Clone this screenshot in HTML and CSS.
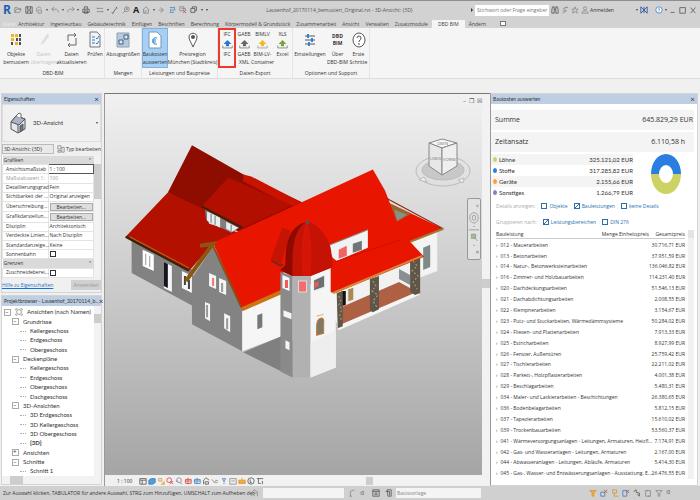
FILE: index.html
```html
<!DOCTYPE html>
<html lang="de">
<head>
    <meta charset="UTF-8">
    <meta name="viewport" content="width=device-width, initial-scale=1.0">
    <title>Lausenhof - 3D-Ansicht</title>
    <link rel="stylesheet" href="styles.css">
</head>
<body>

    <header class="titlebar">
        <div class="quick">
            <span class="logo">R</span>
            <svg class="ico" viewBox="0 0 10 10"><path d="M1 8V2h3l1 1h3v2M1 8l2-4h6L7 8z"/></svg>
            <svg class="ico dark" viewBox="0 0 10 10"><path d="M1 1h8v8H1zM3 1v3h4V1M3 9V6h4v3"/></svg>
            <svg class="ico" viewBox="0 0 10 10"><path d="M2 7V3l3-2 3 2M4 9V5h4v4z"/></svg>
            <span class="caret"></span>
            <svg class="ico" viewBox="0 0 10 10"><path d="M4 1L1 4l3 3M1 4h6l2 2v2"/></svg>
            <span class="caret"></span>
            <svg class="ico" viewBox="0 0 10 10"><path d="M6 1l3 3-3 3M9 4H3L1 6v2"/></svg>
            <span class="caret"></span>
            <svg class="ico dark" viewBox="0 0 10 10"><path d="M3 4V1h4v3M1 4h8v4H1zM3 6h4v3H3z"/></svg>
            <span class="split"></span>
            <svg class="ico" viewBox="0 0 10 10"><path d="M1 3h8M1 7h8M2 2v2M8 6v2"/></svg>
            <span class="caret"></span>
            <svg class="ico dark" viewBox="0 0 10 10"><path d="M2 9l5-7M1 8l2 2M6 1l2 2"/></svg>
            <svg class="ico" viewBox="0 0 10 10"><circle cx="6" cy="4" r="3"/><path d="M4 6L1 9M5 5l1-3 1 3"/></svg>
            <span class="letter">A</span>
            <svg class="ico" viewBox="0 0 10 10"><path d="M1 5l4-4 4 4M2 4v5h6V4M4 9V6h2"/></svg>
            <span class="caret"></span>
            <svg class="ico" viewBox="0 0 10 10"><path d="M3 2l4 3-4 3M1 5h5"/></svg>
            <svg class="ico blue" viewBox="0 0 10 10"><path d="M1 2h5M3 5h5M1 8h5M7 1v3M2 4v3"/></svg>
            <svg class="ico" viewBox="0 0 10 10"><path d="M1 1h5v5H1zM3 3h5v2"/><path class="red" d="M5 5l4 4M9 5L5 9"/></svg>
            <svg class="ico dark" viewBox="0 0 10 10"><path d="M1 3h5v5H1zM3 3V1h5v5H6"/></svg>
            <span class="caret"></span>
            <span class="caret"></span>
        </div>
        <h1 class="doc-title">Lausenhof_20170114_bemustert_Original.rvt - 3D-Ansicht: {3D}</h1>
        <div class="tools">
            <span class="arrow"></span>
            <input class="search" type="text" aria-label="Suche" placeholder="Stichwort oder Frage eingeben">
            <svg class="ico dark" viewBox="0 0 10 10"><path d="M1 9V5l1-4h2v8zM6 9V1h2l1 4v4zM4 4h2"/></svg>
            <svg class="ico" viewBox="0 0 10 10"><path d="M8 1L3 3l4 3-5 3M2 6h3M5 2h4"/></svg>
            <svg class="ico" viewBox="0 0 10 10"><path d="M5 1l1 3h3L7 6l1 3-3-2-3 2 1-3-2-2h3z"/></svg>
            <a class="login" href="#"><svg class="ico" viewBox="0 0 10 10"><circle cx="5" cy="3" r="2"/><path d="M1 9c0-4 8-4 8 0z"/></svg>Anmelden</a>
            <span class="caret"></span>
            <svg class="ico navy" viewBox="0 0 10 10"><path d="M1 1l4 4-4 4zM9 1L5 5l4 4zM5 1v8"/></svg>
            <svg class="ico blue help" viewBox="0 0 10 10"><circle cx="5" cy="5" r="4" fill="#fff"/><path d="M4 4q1-2 2 0L5 5v1M5 7v1"/></svg>
            <span class="caret"></span>
            <button class="win" aria-label="Minimieren"><svg class="ico dark" viewBox="0 0 10 10"><path d="M2 8h5"/></svg></button>
            <button class="win" aria-label="Maximieren"><svg class="ico dark" viewBox="0 0 10 10"><path d="M1 2h7v7H1z"/></svg></button>
            <button class="win" aria-label="Schließen"><svg class="ico dark" viewBox="0 0 10 10"><path d="M2 2l6 7M8 2L2 9"/></svg></button>
        </div>
    </header>

    <nav class="tabs">
        <a class="file" href="#">Datei</a>
        <a href="#">Architektur</a>
        <a href="#">Ingenieurbau</a>
        <a href="#">Gebäudetechnik</a>
        <a href="#">Einfügen</a>
        <a href="#">Beschriften</a>
        <a href="#">Berechnung</a>
        <a href="#">Körpermodell &amp; Grundstück</a>
        <a href="#">Zusammenarbeit</a>
        <a href="#">Ansicht</a>
        <a href="#">Verwalten</a>
        <a href="#">Zusatzmodule</a>
        <a class="active" href="#">DBD BIM</a>
        <a href="#">Ändern</a>
        <span class="tab-menu"></span>
    </nav>

    <section class="ribbon">
        <div class="group g-dbd">
            <div class="buttons">
                <button><svg viewBox="0 0 14 18"><g fill="#f0b429"><path d="M2 3h3v3H2zM6 3h3v3H6zM2 7h3v3H2zM6 11h3v3H6z"/></g><g fill="#505050"><path d="M10 3h2v3h-2zM7 7h2v3H7zM10 7h2v3h-2zM2 11h2v3H2zM10 11h2v3h-2z"/></g></svg><span>Objekte<br>bemustern</span></button>
                <button class="off"><svg viewBox="0 0 14 18"><path d="M2 16L6 9l5-7 1 3-5 7-4 2z" fill="#ddd"/></svg><span>Daten<br>übertragen</span></button>
                <button><svg viewBox="0 0 14 18"><path d="M3 10V4h8M9 2l2 2-2 2M11 7v7H3M5 12l-2 2 2 2" fill="none" stroke="#666"/></svg><span>Daten<br>aktualisieren</span></button>
                <button><svg viewBox="0 0 14 18"><path d="M2 1h7l3 3v12H2z" fill="#eef4fa" stroke="#777"/><path d="M4 6h3M4 9h3M4 12h3M8 7l1 1 2-3M8 12l1 1 2-3" fill="none" stroke="#3a7dc0"/></svg><span>Prüfen</span></button>
            </div>
            <p>DBD-BIM</p>
        </div>
        <div class="group g-mengen">
            <div class="buttons">
                <button><svg viewBox="0 0 14 18"><path d="M1 2h12v14H1z" fill="#b9c9d9" stroke="#8fa2b5"/><path d="M3 9h4v4H3zM8 4h4v4H8z" fill="#dce8f4" stroke="#3c5f86"/></svg><span>Abzugsgrößen</span></button>
            </div>
            <p>Mengen</p>
        </div>
        <div class="group g-preise">
            <div class="buttons">
                <button class="pressed"><svg viewBox="0 0 14 18"><path d="M1 1h8l4 4v12H1z" fill="#fff" stroke="#7b97b3"/><path d="M9 7q-4-1-4 3t4 3M4 9h4M4 11h4" fill="none" stroke="#2b86d9"/></svg><span>Baukosten<br>auswerten</span></button>
                <button><svg viewBox="0 0 14 18"><path d="M7 16C5 11 3 9 3 6c0-5 8-5 8 0 0 3-2 5-4 10z" fill="#fff" stroke="#555"/><circle cx="7" cy="6" r="2" fill="#555"/></svg><span>Preisregion<br>München (Stadtkreis)</span></button>
            </div>
            <p>Leistungen und Baupreise</p>
        </div>
        <div class="group g-export">
            <div class="buttons">
                <button class="marked"><b>IFC</b><svg viewBox="0 0 14 12"><path d="M7 1l5 5H9v3H5V6H2z" fill="#1f78d1"/><path d="M1 8v3h12V8" fill="none" stroke="#777"/></svg><span>IFC</span></button>
                <button><b>GAEB</b><svg viewBox="0 0 14 12"><path d="M7 1l5 5H9v3H5V6H2z" fill="#666"/><path d="M1 8v3h12V8" fill="none" stroke="#777"/></svg><span>GAEB<br>XML</span></button>
                <button><b>BIMLV</b><svg viewBox="0 0 14 12"><path d="M7 1l5 5H9v3H5V6H2z" fill="#f5b81f"/><path d="M1 8v3h12V8" fill="none" stroke="#999"/></svg><span>BIM-LV-<br>Container</span></button>
                <button><b>XLS</b><svg viewBox="0 0 14 12"><path d="M7 1l5 5H9v3H5V6H2z" fill="#7aa33c"/><path d="M1 8v3h12V8" fill="none" stroke="#777"/></svg><span>Excel</span></button>
            </div>
            <p>Daten-Export</p>
        </div>
        <div class="group g-support">
            <div class="buttons">
                <button><svg viewBox="0 0 14 18"><path d="M2 5h10M2 9h10M2 13h10" stroke="#555"/><path d="M5 3v4M9 7v4M6 11v4" stroke="#2b86d9" stroke-width="2"/></svg><span>Einstellungen</span></button>
                <button><strong>DBD<br>BIM</strong><span>Über<br>DBD-BIM</span></button>
                <button><svg viewBox="0 0 14 18"><ellipse cx="7" cy="9" rx="6" ry="7" fill="#fff" stroke="#555"/><path d="M5 7q0-2 2-2t2 2-2 3v1M7 12v2" fill="none" stroke="#555"/></svg><span>Erste<br>Schritte</span></button>
            </div>
            <p>Optionen und Support</p>
        </div>
    </section>
    <div class="options"></div>

    <main class="workspace">
        <aside class="left">
            <section class="panel props">
                <h2>Eigenschaften <button aria-label="Schließen">×</button></h2>
                <div class="type">
                    <svg viewBox="0 0 20 24"><path d="M3 11l5-6 9 3v10l-7 4-7-4z" fill="#e4e8ee" stroke="#555"/><path d="M3 11l5-6 9 3-6 6z" fill="#aab4c6" stroke="#555"/><path d="M10 14v8M12 15l3-2v6l-3 2z" fill="#6d7a92" stroke="#555"/><path d="M8 5l3-3 2 1v4" fill="#fff" stroke="#666"/></svg>
                    <span>3D-Ansicht</span>
                    <i class="caret"></i>
                </div>
                <div class="selector">
                    <select aria-label="Ansicht"><option>3D-Ansicht: {3D}</option></select>
                    <button><svg class="ico" viewBox="0 0 10 10"><path d="M1 1h4v4H1zM1 7h4v2H1zM6 3h3v6H6z"/></svg>Typ bearbeiten</button>
                </div>
                <div class="scroller">
                    <table class="props-table">
                        <tr class="cat"><th>Grafiken</th><th class="fold">⌃</th></tr>
                        <tr><td>Ansichtsmaßstab</td><td class="focus">1 : 100</td></tr>
                        <tr class="dim"><td>Maßstabswert 1:</td><td>100</td></tr>
                        <tr><td>Detaillierungsgrad</td><td>Fein</td></tr>
                        <tr><td>Sichtbarkeit der ...</td><td>Original anzeigen</td></tr>
                        <tr><td>Überschreibung...</td><td><button>Bearbeiten...</button></td></tr>
                        <tr><td>Grafikdarstellun...</td><td><button>Bearbeiten...</button></td></tr>
                        <tr><td>Disziplin</td><td>Architektonisch</td></tr>
                        <tr><td>Verdeckte Linien...</td><td>Nach Disziplin</td></tr>
                        <tr><td>Standardanzeige...</td><td>Keine</td></tr>
                        <tr><td>Sonnenbahn</td><td><input type="checkbox" aria-label="Sonnenbahn"></td></tr>
                        <tr class="cat"><th>Grenzen</th><th class="fold">⌃</th></tr>
                        <tr><td>Zuschneideberei...</td><td><input type="checkbox" aria-label="Zuschneidebereich"></td></tr>
                    </table>
                    <div class="vbar"><i></i></div>
                </div>
                <div class="props-foot"><a href="#">Hilfe zu Eigenschaften</a><button disabled>Anwenden</button></div>
            </section>

            <section class="panel browser">
                <h2>Projektbrowser - Lausenhof_20170114_b... <button aria-label="Schließen">×</button></h2>
                <div class="scroller">
                    <ul class="tree">
                        <li class="l0 node"><svg class="ico" viewBox="0 0 10 10"><circle cx="5" cy="5" r="3"/><path d="M1 3V1h2M7 1h2v2M1 7v2h2M7 9h2V7"/></svg>Ansichten (nach Namen)</li>
                        <li class="l1 node">Grundrisse</li>
                        <li class="l2">Kellergeschoss</li>
                        <li class="l2">Erdgeschoss</li>
                        <li class="l2">Obergeschoss</li>
                        <li class="l1 node">Deckenpläne</li>
                        <li class="l2">Kellergeschoss</li>
                        <li class="l2">Erdgeschoss</li>
                        <li class="l2">Obergeschoss</li>
                        <li class="l2">Dachgeschoss</li>
                        <li class="l1 node">3D-Ansichten</li>
                        <li class="l2">3D Erdgeschoss</li>
                        <li class="l2">3D Kellergeschoss</li>
                        <li class="l2">3D Obergeschoss</li>
                        <li class="l2"><b>{3D}</b></li>
                        <li class="l1 node closed">Ansichten</li>
                        <li class="l1 node">Schnitte</li>
                        <li class="l2">Schnitt 1</li>
                    </ul>
                    <div class="vbar"><i></i></div>
                </div>
                <div class="hbar"><i></i></div>
            </section>
        </aside>

        <section class="view">
            <div class="canvas">
                <svg viewBox="106 95 374 379" role="img" aria-label="3D-Modell">
                    <!-- rear wing -->
                    <path d="M132 240v33l61 33v-36z" fill="#828282"/>
                    <path d="M192 146l53 30 57 27-62 30-72-40z" fill="#8f0d00"/>
                    <path d="M168 193l37 17 4 14 30 9-26 11-24 27-63-34z" fill="#b41000"/>
                    <path d="M243 175l8 2 50 26-10 4-48-25z" fill="#c91200"/>
                    <path d="M228 178l64 28-49 22-41-21z" fill="#b20f00"/>
                    <path d="M205 210l34 18-8 5-25-13z" fill="#7f7f7f"/>
                    <path d="M202 207l40 21" stroke="#3a2408" stroke-width="2"/>
                    <path d="M207 212l13 6v10l-13-7zM226 222l12 6-6 4-6-3z" fill="#e8edf0"/>
                    <path d="M211 214v9M215 216v9M231 225v6" stroke="#777"/>
                    <path d="M126 237l63 34" stroke="#33240c" stroke-width="2"/>
                    <path d="M130 237l59 31" stroke="#b06b1c"/>
                    <path d="M143 250l11 5v16l-11-5z" fill="#fff"/>
                    <path d="M146 254v11M150 256v11" stroke="#989898"/>
                    <path d="M164 262l8 4v26l-8-4z" fill="#f5f5f5"/>
                    <path d="M164 262l4 2v24l-4-2z" fill="#15151f"/>
                    <path d="M182 271l10 5v17l-10-5z" fill="#f5f5f5"/>
                    <path d="M185 276v9M189 280v9" stroke="#444" stroke-width="2"/>

                    <!-- gable -->
                    <path d="M213 247l29 63v41l-50-27v-46z" fill="#838383"/>
                    <path d="M242 311l39-19v44l-39 15z" fill="#f6f6f6"/>
                    <path d="M243 352l38-16 12 5v36z" fill="#808080"/>
                    <path d="M209 273l7 3v13l-7-3zM219 278l7 3v14l-7-3zM205 302l5 2v17l-5-3zM224 313l6 3v16l-6-4z" fill="#f5f5f5"/>
                    <path d="M213 278v8" stroke="#e77" stroke-width="2"/>
                    <path d="M222 283v9M207 305v12M227 318v11" stroke="#999" stroke-width="2"/>
                    <path d="M257 315l5-2v14l-5 2z" fill="#777"/>

                    <!-- right wing walls -->
                    <path d="M330 280l80-37 26-12v40l-18 7v15l-80 35-8-20z" fill="#f1f1f1"/>
                    <path d="M411 242l24-10v39l-24 6z" fill="#f4f4f4"/>
                    <path d="M422 248l7-3v22l-7 3z" fill="#7f8988"/>
                    <path d="M398 269l11 6v10l-11-6z" fill="#8a8f94"/>
                    <path d="M341 307l57-25 20 11-77 33z" fill="#ad6142"/>
                    <path d="M336 326l82-35v4l-80 35z" fill="#f5f5f5"/>
                    <path d="M341 291h4v14l-4 1z" fill="#111"/>
                    <path d="M347 289l6-2v13l-6 2z" fill="#a98a54" stroke="#eee"/>
                    <path d="M336 293l6-2v35l-5 2zM369 279l9-3v33l-6 3-3-2zM409 260l10-4v37l-5 2-5-3z" fill="#605648"/>
                    <path d="M338 296l2 4-2 5 3 4-2 6 2 6M372 281l3 5-4 5 6 4-5 6 4 6M412 261l4 5-5 5 6 5-5 6 4 7" fill="none" stroke="#aaa08a" stroke-dasharray="2 2"/>

                    <!-- main roof -->
                    <path d="M213 243l92-42 28-13 39-18 12 21 5 13 53 25-33 13 14 15-91 37-49-22-3 20-38 18z" fill="#e81500"/>
                    <path d="M389 204l21 10-14 8z" fill="#96672a"/>
                    <path d="M393 210l13 5-10 6z" fill="#8c8f89"/>
                    <path d="M386 199l56 30" stroke="#8f2410"/>
                    <path d="M442 229l-33 13" stroke="#a87536" stroke-width="2"/>
                    <path d="M421 256l-91 38" stroke="#d18a3c" stroke-width="2"/>
                    <path d="M242 309l41-18" stroke="#cc7312" stroke-width="4"/>
                    <path d="M213 246l28 61" stroke="#8a4f12" stroke-width="2"/>
                    <path d="M200 246l13-2-27 37" fill="none" stroke="#8a5713" stroke-width="4"/>
                    <path d="M327 246l40-16v18l-31 13-4-3z" fill="#f2f2f2"/>
                    <path d="M327 246l40-16" stroke="#8a8175"/>
                    <path d="M338 250l8-4v10l-8 3z" fill="#f26464"/>
                    <path d="M352 244l9-3v9l-9 3z" fill="#6f7677"/>
                    <path d="M334 262l66-22" stroke="#cf1200"/>

                    <!-- tower -->
                    <path d="M280 272l12 4v101l-12-6z" fill="#8a8a8a"/>
                    <path d="M292 276h18v101h-18z" fill="#b1b1b1"/>
                    <path d="M310 276l20-8v24l5 3v72l-25 10z" fill="#f5f5f5"/>
                    <path d="M310 342l25-12v37l-25 10z" fill="#eee"/>
                    <path d="M282 228l8 3-10 34-10-4z" fill="#c41404"/>
                    <path d="M271 261l9 5 3-2" fill="none" stroke="#333"/>
                    <path d="M306 222c-15 5-21 15-21 43l-5 5 12 6h18l22-9c-2-12 1-20-9-33-5-7-10-11-17-12z" fill="#c41205"/>
                    <path d="M306 222c-11 7-15 20-14 54l-12-6 5-5c0-28 6-38 21-43z" fill="#8e0900"/>
                    <path d="M306 222c-5 12-6 25-4 54h8c2-26 1-42-4-54z" fill="#d61507"/>
                    <circle cx="307" cy="223" r="2" fill="#555"/>
                    <path d="M282 275l7 3v13l-7-3z" fill="#f7f7f7"/>
                    <path d="M286 280v8" stroke="#ec5a5a" stroke-width="3"/>
                    <path d="M298 281h8v11h-8z" fill="#f46d6d" stroke="#ddd"/>
                    <path d="M313 280l11-5v12l-11 4z" fill="#687070" stroke="#eee"/>
                    <path d="M314 283l4-2v5l-4 2z" fill="#ec5a5a"/>
                    <path d="M283 310l8 3v6l-8-3zM285 340l4 2v8l-4-2z" fill="#f5f5f5"/>
                    <path d="M316 335v-9q0-7 4-8t3 6v9z" fill="#7b7b69" stroke="#c87635"/>
                    <path d="M316 316l7-2" stroke="#d9b48f"/>
                </svg>

                <div class="win-tools"><button aria-label="Minimieren">–</button><button aria-label="Wiederherstellen">❐</button><button aria-label="Schließen">☒</button></div>
                <svg class="cube" viewBox="0 0 58 52">
                    <ellipse cx="29" cy="34" rx="27" ry="15" fill="none" stroke="#bbb"/>
                    <ellipse cx="29" cy="33" rx="21" ry="10" fill="#c8c8c8" stroke="#bbb"/>
                    <path d="M15 6l13-4 15 4-15 5z" fill="#f7f7f7" stroke="#888"/>
                    <path d="M15 6l13 5v27l-13-9z" fill="#e7e7e7" stroke="#888"/>
                    <path d="M28 11l15-5v23l-15 9z" fill="#efefef" stroke="#888"/>
                    <text x="16" y="23">LINKS</text>
                    <text x="29" y="24">VORNE</text>
                    <text x="23" y="8">OBEN</text>
                    <path d="M5 43l5-3 3 5zM44 43l6-2-1 5z" fill="#eee" stroke="#bbb"/>
                </svg>
                <div class="navbar">
                    <svg viewBox="0 0 14 60"><circle cx="11" cy="3" r="1"/><ellipse cx="7" cy="17" rx="5" ry="6"/><ellipse cx="7" cy="17" rx="2" ry="3"/><path d="M6 27h2M1 31h12M6 49h2M10 56h2v2h-2z"/><path d="M4 36h5v5H4z" fill="#9bc28d"/><path d="M7 39l4 5"/></svg>
                </div>
            </div>
            <div class="vbar"><i></i></div>
            <div class="viewbar">
                <span>1 : 100</span>
                <svg class="ico dark" viewBox="0 0 10 10"><path d="M1 2h8v7H1zM1 4h8M4 4v5"/></svg>
                <svg class="ico blue" viewBox="0 0 10 10"><path class="fill" d="M1 4l3-2h5v5L6 9H1z"/></svg>
                <svg class="ico orange" viewBox="0 0 10 10"><path d="M2 2h4v3H2zM6 6l3 3M9 5v4H5"/></svg>
                <svg class="ico red" viewBox="0 0 10 10"><circle cx="4" cy="4" r="3"/><path d="M5 5l4 4M9 5L5 9"/></svg>
                <svg class="ico" viewBox="0 0 10 10"><circle cx="5" cy="4" r="3"/><path d="M1 5h3M6 7l3 2"/></svg>
                <svg class="ico red" viewBox="0 0 10 10"><path d="M2 3h7v5H2zM5 1v8M1 5h8"/></svg>
                <svg class="ico blue" viewBox="0 0 10 10"><path d="M2 3h7v5H2zM5 1v8M1 5h8"/></svg>
                <svg class="ico dark" viewBox="0 0 10 10"><path d="M2 9V4l3-3 4 3M4 9V6h4v3z"/></svg>
                <svg class="ico" viewBox="0 0 10 10"><path d="M1 3l3 4 2-3 3 1M5 7h3"/></svg>
                <svg class="ico blue" viewBox="0 0 10 10"><path d="M3 2h4L5 6zM5 7v2"/></svg>
                <svg class="ico" viewBox="0 0 10 10"><path d="M1 2h8v7H1zM3 5h4"/></svg>
                <svg class="ico orange" viewBox="0 0 10 10"><path class="fill" d="M1 4h8v4H1zM5 1v3"/></svg>
                <svg class="ico dark" viewBox="0 0 10 10"><circle cx="5" cy="5" r="4"/><path d="M4 3v4h2"/></svg>
                <svg class="ico dark" viewBox="0 0 10 10"><path d="M1 2h8M3 2v6h3M8 5v4"/></svg>
                <div class="hbar"><i></i></div>
            </div>
        </section>

        <aside class="panel costs">
            <h2>Baukosten auswerten <button aria-label="Schließen">×</button></h2>
            <div class="costs-body">
                <p class="total"><span>Summe</span><span>645.829,29 EUR</span></p>
                <p class="total hours"><span>Zeitansatz</span><span>6.110,58 h</span></p>
                <div class="split-row">
                    <dl class="legend">
                        <div><dt class="lohn">Löhne</dt><dd>325.121,02 EUR</dd></div>
                        <div><dt class="stoff">Stoffe</dt><dd>317.285,82 EUR</dd></div>
                        <div><dt class="geraet">Geräte</dt><dd>2.155,66 EUR</dd></div>
                        <div><dt class="sonst">Sonstiges</dt><dd>1.266,79 EUR</dd></div>
                    </dl>
                    <svg class="donut" viewBox="0 0 32 40"><path d="M1 20a15 20 0 0 1 30 0h-8a7 9 0 0 0-14 0z" fill="#2a7de1"/><path d="M1 20a15 20 0 0 0 30 0h-8a7 9 0 0 1-14 0z" fill="#cdd265"/></svg>
                </div>
                <div class="checks">
                    <span>Details anzeigen:</span>
                    <label><input type="checkbox">Objekte</label>
                    <label><input type="checkbox" checked>Bauleistungen</label>
                    <label><input type="checkbox">keine Details</label>
                </div>
                <div class="checks">
                    <span>Gruppieren nach:</span>
                    <label><input type="checkbox" checked>Leistungsbereichen</label>
                    <label><input type="checkbox">DIN 276</label>
                </div>
                <div class="scroller">
                    <table class="cost-table">
                        <thead><tr><th>Bauleistung</th><th>Menge Einheitspreis</th><th>Gesamtpreis</th></tr></thead>
                        <tbody>
                            <tr><td colspan="2">012 - Mauerarbeiten</td><td>30.716,71 EUR</td></tr>
                            <tr><td colspan="2">013 - Betonarbeiten</td><td>37.951,59 EUR</td></tr>
                            <tr><td colspan="2">014 - Natur-, Betonwerksteinarbeiten</td><td>136.046,82 EUR</td></tr>
                            <tr><td colspan="2">016 - Zimmer- und Holzbauarbeiten</td><td>114.231,40 EUR</td></tr>
                            <tr><td colspan="2">020 - Dachdeckungsarbeiten</td><td>51.546,13 EUR</td></tr>
                            <tr><td colspan="2">021 - Dachabdichtungsarbeiten</td><td>2.008,55 EUR</td></tr>
                            <tr><td colspan="2">022 - Klempnerarbeiten</td><td>3.154,67 EUR</td></tr>
                            <tr><td colspan="2">023 - Putz- und Stuckarbeiten, Wärmedämmsysteme</td><td>50.284,02 EUR</td></tr>
                            <tr><td colspan="2">024 - Fliesen- und Plattenarbeiten</td><td>7.913,33 EUR</td></tr>
                            <tr><td colspan="2">025 - Estricharbeiten</td><td>8.927,99 EUR</td></tr>
                            <tr><td colspan="2">026 - Fenster, Außentüren</td><td>25.759,42 EUR</td></tr>
                            <tr><td colspan="2">027 - Tischlerarbeiten</td><td>22.211,02 EUR</td></tr>
                            <tr><td colspan="2">028 - Parkett-, Holzpflasterarbeiten</td><td>4.001,38 EUR</td></tr>
                            <tr><td colspan="2">029 - Beschlagarbeiten</td><td>5.480,31 EUR</td></tr>
                            <tr><td colspan="2">034 - Maler- und Lackierarbeiten - Beschichtungen</td><td>26.380,65 EUR</td></tr>
                            <tr><td colspan="2">036 - Bodenbelagarbeiten</td><td>5.812,15 EUR</td></tr>
                            <tr><td colspan="2">037 - Tapezierarbeiten</td><td>15.610,02 EUR</td></tr>
                            <tr><td colspan="2">039 - Trockenbauarbeiten</td><td>53.560,37 EUR</td></tr>
                            <tr><td colspan="2">041 - Wärmeversorgungsanlagen - Leitungen, Armaturen, Heizfl...</td><td>7.174,91 EUR</td></tr>
                            <tr><td colspan="2">042 - Gas- und Wasseranlagen - Leitungen, Armaturen</td><td>2.167,00 EUR</td></tr>
                            <tr><td colspan="2">044 - Abwasseranlagen - Leitungen, Abläufe, Armaturen</td><td>5.414,30 EUR</td></tr>
                            <tr><td colspan="2">045 - Gas-, Wasser- und Entwässerungsanlagen - Ausstattung, E...</td><td>26.476,55 EUR</td></tr>
                        </tbody>
                    </table>
                    <div class="vbar"><i></i></div>
                </div>
            </div>
        </aside>
    </main>

    <footer class="status">
        <span class="hint">Zur Auswahl klicken, TABULATOR für andere Auswahl, STRG zum Hinzufügen, UMSCHALT zum Aufheben der</span>
        <svg class="ico" viewBox="0 0 10 10"><path d="M1 9V4l3-3 4 3v5M4 9V5h3"/></svg>
        <select class="workset" aria-label="Bearbeitungsbereich"><option></option></select>
        <svg class="ico" viewBox="0 0 10 10"><path d="M3 9V3l5-2M2 9h3"/></svg>
        <span class="count">:0</span>
        <svg class="ico dark" viewBox="0 0 10 10"><path d="M1 1h8v8H1zM1 3h8M3 5h4M3 7h4"/></svg>
        <svg class="ico dark" viewBox="0 0 10 10"><path d="M2 3h5v5M4 1h5v8H5z"/></svg>
        <select class="option" aria-label="Entwurfsoption"><option>Basisvorlage</option></select>
        <div class="filters">
            <svg class="ico orange" viewBox="0 0 10 10"><path class="fill" d="M1 2h8L6 5v4H4V5z"/></svg>
            <svg class="ico blue" viewBox="0 0 10 10"><path d="M1 4h5v5H1z"/><path class="red" d="M5 1l4 4M9 1L5 5"/></svg>
            <svg class="ico orange" viewBox="0 0 10 10"><path d="M2 1h5v4H2zM4 5v4h5"/></svg>
            <svg class="ico blue" viewBox="0 0 10 10"><path d="M1 2h5v7H1z"/><path class="red" d="M5 1l4 4M9 1L5 5"/></svg>
            <svg class="ico dark" viewBox="0 0 10 10"><path d="M1 3l3-2v3l4 1v4M5 6l3 3"/></svg>
            <svg class="ico" viewBox="0 0 10 10"><path d="M2 2h6v7H2zM4 1v2M6 8v2"/></svg>
            <svg class="ico" viewBox="0 0 10 10"><path d="M1 2h8L6 5v4H4V5z"/></svg>
            <span>:0</span>
        </div>
    </footer>

</body>
</html>
```
FILE: styles.css
```css
* {
    margin: 0;
    padding: 0;
    box-sizing: border-box;
}

body {
    display: flex;
    flex-direction: column;
    height: 100vh;
    overflow: hidden;
    background-color: #f0f0f0;
    color: #333;
    font-family: "Open Sans", sans-serif;
    font-size: 5px;
    line-height: 8px;
    white-space: nowrap;
}

button, input, select {
    font: inherit;
    color: inherit;
    border: none;
    background: none;
    appearance: none;
    border-radius: 0;
}

a {
    color: inherit;
    text-decoration: none;
}

h1, h2 {
    font-size: inherit;
    font-weight: normal;
}

/* small icons */
.ico {
    flex: none;
    width: 8px;
    height: 10px;
    fill: none;
    stroke: #888;
}

.ico.dark { stroke: #555; }
.ico.blue { stroke: #3a80c4; }
.ico.navy { stroke: #2449a0; }
.ico.orange { stroke: #dc9228; }
.ico.red, .ico .red { stroke: #d8443c; }
.ico.blue .fill { fill: #4f9ddb; }
.ico.orange .fill { fill: #f0b040; }

.caret {
    flex: none;
    border: 1px solid transparent;
    border-top: 2px solid #444;
}

/* title bar */
.titlebar {
    display: flex;
    align-items: center;
    height: 19px;
    padding: 0 3px;
    border-top: 1px solid #8e8e8e;
    background-color: #d2d2d2;
}

.quick {
    display: flex;
    align-items: center;
    justify-content: space-between;
    width: 205px;
}

.logo {
    color: #1d5fae;
    font-size: 12px;
    font-weight: bold;
}

.letter {
    color: #222;
    font-size: 9px;
    font-weight: bold;
}

.doc-title {
    flex: 1;
    text-align: center;
    color: #555;
}

.tools {
    display: flex;
    align-items: center;
    gap: 2px;
    width: 226px;
}

.arrow {
    border: 2px solid transparent;
    border-left: 2px solid #333;
    border-right: none;
}

.search {
    width: 74px;
    height: 11px;
    padding: 0 2px;
    background-color: #fff;
}

.search::placeholder {
    color: #777;
}

.login {
    display: flex;
    flex: 1;
    align-items: center;
    gap: 1px;
}

.help {
    margin-left: 5px;
}

.win {
    display: flex;
}

/* ribbon tabs */
.tabs {
    display: flex;
    align-items: center;
    height: 9px;
    padding-left: 3px;
    gap: 6px;
    background-color: #d2d2d2;
    color: #444;
}

.tabs .file {
    color: #eee;
    margin-right: -3px;
}

.tabs .active {
    margin: 0 -2px;
    padding: 0 6px;
    background-color: #f5f5f5;
}

.tab-menu {
    width: 6px;
    height: 5px;
    margin-left: 8px;
    border: 1px solid #777;
    background-color: #fff;
}

/* ribbon */
.ribbon {
    display: flex;
    height: 51px;
    padding-left: 2px;
    background-color: #f5f5f5;
    border-bottom: 1px solid #dcdcdc;
}

.group {
    display: flex;
    flex-direction: column;
    justify-content: space-between;
    border-right: 1px solid #e4e4e4;
    text-align: center;
}

.group p {
    line-height: 10px;
}

.buttons {
    display: grid;
    height: 40px;
}

.g-dbd .buttons { grid-template-columns: 28px 27px 29px 18px; }
.g-mengen .buttons { grid-template-columns: 36px; }
.g-preise .buttons { grid-template-columns: 26px 49px; }
.g-export .buttons { grid-template-columns: 18px 16px 21px 19px; }
.g-support .buttons { grid-template-columns: 34px 21px 21px; }

.buttons button {
    display: flex;
    flex-direction: column;
    align-items: center;
    height: 40px;
    padding-top: 3px;
}

.buttons svg {
    flex: none;
    width: 14px;
    height: 18px;
    margin-bottom: 1px;
}

.buttons .off {
    color: #c4c4c4;
}

.buttons .pressed {
    background-color: #a6cff3;
    box-shadow: inset 0 0 0 1px #7fb2e0;
}

.buttons .marked {
    box-shadow: inset 0 0 0 2px #ee3a2c;
}

.g-export b {
    font-weight: normal;
    line-height: 7px;
}

.g-export .buttons svg {
    width: 11px;
    height: 12px;
    margin-bottom: 0;
}

.g-support strong {
    height: 19px;
    padding-top: 2px;
    line-height: 7px;
}

.options {
    height: 14px;
}

/* workspace */
.workspace {
    display: flex;
    flex: 1;
    min-height: 0;
}

.left {
    display: flex;
    flex-direction: column;
    flex: none;
    gap: 2px;
    width: 105px;
    padding: 0 2px 0 1px;
    border-right: 1px solid #999;
}

.panel {
    display: flex;
    flex-direction: column;
    border: 1px solid #d4d4d4;
    background-color: #f0f0f0;
}

.panel h2 {
    display: flex;
    justify-content: space-between;
    height: 10px;
    padding: 0 2px;
    background-color: #bfcfe3;
    font-family: Lato, sans-serif;
    line-height: 10px;
}

.panel h2 button {
    font-size: 8px;
}

.type {
    display: flex;
    align-items: center;
    height: 38px;
    border: 1px solid #ddd;
}

.type svg {
    width: 30px;
    height: 24px;
    padding: 0 5px;
}

.type span {
    flex: 1;
}

.type .caret {
    margin-right: 2px;
}

.selector {
    display: flex;
    align-items: center;
    gap: 3px;
    height: 14px;
}

.selector select {
    width: 54px;
    height: 10px;
    padding-left: 1px;
    border: 1px solid #bbb;
    background-color: #e9e9e9;
}

.selector button {
    display: flex;
    align-items: center;
    gap: 1px;
}

.scroller {
    display: flex;
    flex: 1;
    min-height: 0;
}

.vbar {
    flex: none;
    width: 7px;
    padding-top: 8px;
    background-color: #f2f2f2;
}

.vbar i {
    display: block;
    height: 35px;
    background-color: #cdcdcd;
}

.hbar {
    height: 8px;
    padding-left: 8px;
    background-color: #f2f2f2;
}

.hbar i {
    display: block;
    width: 13px;
    height: 8px;
    background-color: #cdcdcd;
}

.props-table {
    flex: 1;
    width: 93px;
    height: 100%;
    table-layout: fixed;
    border-collapse: collapse;
    background-color: #fff;
    line-height: 7px;
}

.props-table td {
    padding-left: 1px;
    border: 1px solid #e3e3e3;
}

.props-table td:first-child {
    padding-left: 3px;
}

.props-table th {
    padding-left: 1px;
    background-color: #dadada;
    font-weight: normal;
    text-align: left;
}

.props-table .fold {
    padding-right: 2px;
    text-align: right;
}

.props-table .dim {
    color: #999;
}

.props-table .focus {
    border: 1px solid #555;
}

.props-table button {
    display: block;
    width: 100%;
    height: 8px;
    border: 1px solid #aaa;
    background-color: #dedede;
    line-height: 6px;
}

input[type="checkbox"] {
    display: block;
    width: 6px;
    height: 6px;
    border: 1px solid currentColor;
    background-color: #fff;
}

.props-foot {
    display: flex;
    align-items: center;
    justify-content: space-between;
    height: 14px;
}

.props-foot a {
    color: #1673cf;
    text-decoration: underline;
}

.props-foot button {
    width: 30px;
    height: 10px;
    background-color: #d0d0d0;
    color: #999;
}

.props {
    height: 200px;
}

.browser {
    flex: 1;
    min-height: 0;
    margin-bottom: 1px;
}

.tree {
    display: flex;
    flex: 1;
    flex-direction: column;
    padding-top: 1px;
    background-color: #fff;
    list-style: none;
}

.tree li {
    display: flex;
    flex: 1;
    align-items: center;
    gap: 4px;
    padding-left: 2px;
}

.tree li::before {
    content: "";
    width: 6px;
    border-top: 1px dotted #aaa;
}

.tree .node::before {
    content: "−";
    width: 5px;
    height: 5px;
    border: 1px solid #aaa;
    line-height: 3px;
}

.tree .closed::before {
    content: "+";
}

.tree .l1 {
    padding-left: 10px;
}

.tree .l2 {
    padding-left: 18px;
}

.browser .vbar i {
    height: 9px;
}

/* larger lettering where the lines have room */
.tree, .type, .legend {
    font-family: Lato, sans-serif;
    font-size: 6px;
}

/* 3D view */
.view {
    display: grid;
    flex: 1;
    grid-template-columns: 1fr 8px;
    grid-template-rows: 1fr 11px;
    border-top: 1px solid #777;
    min-width: 0;
}

.canvas {
    position: relative;
    min-height: 0;
    background: linear-gradient(#f1f1f1, #a5a5a5);
}

.canvas > svg:first-child {
    display: block;
    width: 100%;
    height: 100%;
}

.win-tools {
    position: absolute;
    top: 3px;
    right: 0;
    display: flex;
    gap: 3px;
    color: #555;
    font-size: 6px;
}

.cube {
    position: absolute;
    top: 43px;
    right: 10px;
    width: 58px;
    height: 52px;
}

.cube text {
    font-size: 4px;
    fill: #777;
}

.navbar {
    position: absolute;
    top: 104px;
    right: 1px;
    width: 14px;
    height: 62px;
    border: 1px solid #999;
    border-radius: 2px;
    background-color: #e2e2e2;
}

.navbar svg {
    width: 12px;
    height: 60px;
    fill: none;
    stroke: #999;
}

.view > .vbar {
    width: 8px;
    padding-top: 185px;
}

.view > .vbar i {
    height: 9px;
}

.viewbar {
    display: flex;
    grid-column: 1 / 3;
    align-items: center;
    gap: 1px;
    padding-left: 12px;
}

.viewbar span {
    width: 21px;
}

.viewbar .hbar {
    flex: 1;
    padding-left: 101px;
}

.viewbar .hbar i {
    width: 7px;
}

/* cost panel */
.costs {
    flex: none;
    width: 208px;
    margin-right: 2px;
    border-left: 1px solid #999;
}

.costs-body {
    display: flex;
    flex: 1;
    flex-direction: column;
    min-height: 0;
    padding: 6px 3px 6px 0;
    background-color: #fff;
}

.total {
    display: flex;
    align-items: center;
    justify-content: space-between;
    height: 20px;
    margin-bottom: 2px;
    padding: 0 1px 0 4px;
    background-color: #f4f4f4;
    font-size: 7px;
}

.hours {
    padding-right: 9px;
}

.split-row {
    display: flex;
    gap: 17px;
    height: 44px;
}

.legend {
    display: flex;
    flex-direction: column;
    width: 142px;
}

.legend div {
    display: flex;
    flex: 1;
    align-items: center;
    justify-content: space-between;
    padding-left: 2px;
}

.legend div:nth-child(odd) {
    background-color: #f4f4f4;
}

.legend dt {
    display: flex;
    align-items: center;
    gap: 2px;
}

.legend dt::before {
    content: "";
    width: 4px;
    height: 5px;
    border-radius: 50%;
    background-color: #cdd265;
}

.legend .stoff::before { background-color: #2a7de1; }
.legend .geraet::before { background-color: #f9a03f; }
.legend .sonst::before { background-color: #7f86c8; }

.donut {
    width: 32px;
    height: 40px;
}

.checks {
    display: flex;
    align-items: center;
    gap: 6px;
    height: 16px;
    padding-left: 5px;
    color: #2a6fae;
}

.checks span {
    color: #aaa;
}

.checks label {
    display: flex;
    align-items: center;
    gap: 2px;
}

.checks input:checked {
    background: linear-gradient(135deg, #fff 40%, #2a6fae 40%, #2a6fae 60%, #fff 60%);
}

.cost-table {
    flex: 1;
    width: 190px;
    height: 100%;
    margin: 0 3px 0 5px;
    border-collapse: collapse;
    table-layout: fixed;
}

.cost-table th {
    border-bottom: 1px solid #ccc;
    font-weight: normal;
    text-align: left;
}

.cost-table th:last-child {
    width: 36px;
}

.cost-table th + th,
.cost-table td:last-child {
    text-align: right;
}

.cost-table td:first-child::before {
    content: "›";
    padding-right: 3px;
}

.costs .vbar {
    width: 6px;
    padding: 0;
}

.costs .vbar i {
    height: 8px;
    background-color: #e4e4e4;
}

/* status bar */
.status {
    display: flex;
    align-items: center;
    gap: 4px;
    height: 14px;
    padding: 0 3px;
    background-color: #d0d0d0;
}

.hint {
    width: 244px;
}

.status select {
    height: 10px;
    padding-left: 1px;
    background-color: #f4f4f4;
    color: #888;
}

.workset {
    width: 81px;
}

.count {
    width: 8px;
}

.option {
    width: 85px;
}

.filters {
    display: flex;
    gap: 3px;
    width: 108px;
    margin-left: auto;
}
```
